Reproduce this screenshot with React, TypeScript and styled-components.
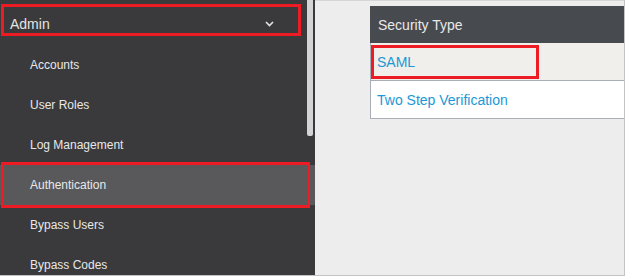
import React from "react";
import styled, { createGlobalStyle } from "styled-components";

const Global = createGlobalStyle`
  html, body { margin: 0; padding: 0; background: #ffffff; }
  body { font-family: "Liberation Sans", Arial, sans-serif; }
`;

const Frame = styled.div`
  position: relative;
  display: flex;
  width: 624px;
  height: 275px;
  border-right: 1px solid #c3c3c3;
  border-bottom: 1px solid #c3c3c3;
  overflow: hidden;
`;

const Sidebar = styled.nav`
  position: relative;
  width: 315px;
  flex: none;
  background: #3a3a3c;
  display: flex;
  flex-direction: column;
  overflow: hidden;
`;

const SectionHeader = styled.div`
  height: 45px;
  flex: none;
  display: flex;
  align-items: center;
  justify-content: space-between;
  padding: 3px 41px 0 10px;
  box-sizing: border-box;
  color: #e4e4e4;
  font-size: 14px;
`;

const MenuItem = styled.div<{ $active?: boolean }>`
  height: 40px;
  flex: none;
  display: flex;
  align-items: center;
  padding-left: 30px;
  color: #e8e8e8;
  font-size: 12px;
  background: ${(p) => (p.$active ? "#59595b" : "transparent")};
`;

const ScrollThumb = styled.div`
  position: absolute;
  left: 307px;
  top: 0;
  width: 6px;
  height: 136px;
  background: #d4d4d4;
  border-radius: 0 0 2px 2px;
`;

const Content = styled.main`
  flex: 1;
  background: #ededed;
  padding: 5px 0 0 55px;
  border-top: 1px solid #d6d6d6;
  box-sizing: border-box;
`;

const Table = styled.div`
  display: flex;
  flex-direction: column;
  border-left: 1px solid #a9adb5;
`;

const HeaderCell = styled.div`
  height: 37px;
  background: #474a4f;
  color: #e9e9e9;
  font-size: 14px;
  display: flex;
  align-items: center;
  padding-left: 8px;
  margin-left: -1px;
`;

const Row = styled.div<{ $shade?: boolean }>`
  height: 37px;
  display: flex;
  align-items: center;
  padding-left: 6px;
  background: ${(p) => (p.$shade ? "#f0efeb" : "#ffffff")};
  border-bottom: 1px solid #a9adb5;
`;

const Link = styled.a`
  color: #1b98d5;
  font-size: 14px;
  text-decoration: none;
`;

const Highlight = styled.div<{ $l: number; $t: number; $w: number; $h: number }>`
  position: absolute;
  left: ${(p) => p.$l}px;
  top: ${(p) => p.$t}px;
  width: ${(p) => p.$w}px;
  height: ${(p) => p.$h}px;
  border: 3px solid #ed1c24;
  box-sizing: border-box;
  pointer-events: none;
`;

const Chevron = () => (
  <svg width="9" height="6" viewBox="0 0 9 6">
    <polyline points="1,1 4.5,4.5 8,1" fill="none" stroke="#e4e4e4" strokeWidth="1.6" />
  </svg>
);

const items = ["Accounts", "User Roles", "Log Management", "Authentication", "Bypass Users", "Bypass Codes"];

export default function App() {
  return (
    <>
      <Global />
      <Frame>
        <Sidebar>
          <SectionHeader>
            <span>Admin</span>
            <Chevron />
          </SectionHeader>
          {items.map((t) => (
            <MenuItem key={t} $active={t === "Authentication"}>
              {t}
            </MenuItem>
          ))}
          <ScrollThumb />
        </Sidebar>
        <Content>
          <Table>
            <HeaderCell>Security Type</HeaderCell>
            <Row $shade>
              <Link>SAML</Link>
            </Row>
            <Row>
              <Link>Two Step Verification</Link>
            </Row>
          </Table>
        </Content>
        <Highlight $l={1} $t={4} $w={300} $h={32} />
        <Highlight $l={1} $t={162} $w={309} $h={46} />
        <Highlight $l={371} $t={45} $w={168} $h={34} />
      </Frame>
    </>
  );
}
